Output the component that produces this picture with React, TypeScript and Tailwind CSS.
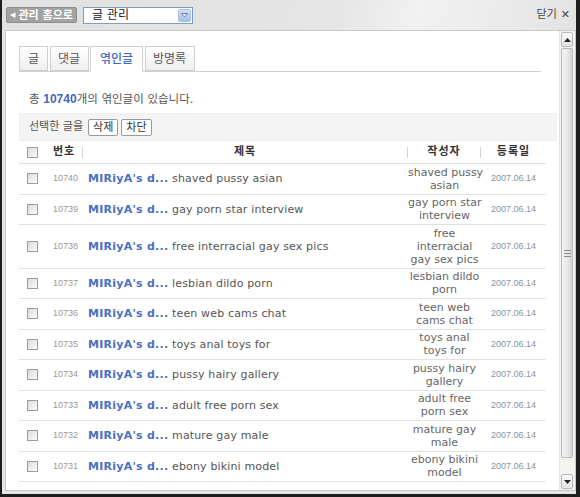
import React from 'react';

type Row = { no: number; title: string; author: string[] };

const rows: Row[] = [
  { no: 10740, title: 'shaved pussy asian', author: ['shaved pussy', 'asian'] },
  { no: 10739, title: 'gay porn star interview', author: ['gay porn star', 'interview'] },
  { no: 10738, title: 'free interracial gay sex pics', author: ['free', 'interracial', 'gay sex pics'] },
  { no: 10737, title: 'lesbian dildo porn', author: ['lesbian dildo', 'porn'] },
  { no: 10736, title: 'teen web cams chat', author: ['teen web', 'cams chat'] },
  { no: 10735, title: 'toys anal toys for', author: ['toys anal', 'toys for'] },
  { no: 10734, title: 'pussy hairy gallery', author: ['pussy hairy', 'gallery'] },
  { no: 10733, title: 'adult free porn sex', author: ['adult free', 'porn sex'] },
  { no: 10732, title: 'mature gay male', author: ['mature gay', 'male'] },
  { no: 10731, title: 'ebony bikini model', author: ['ebony bikini', 'model'] },
];

const font = "font-['DejaVu_Sans','Noto_Sans_CJK_KR',sans-serif]";

const Checkbox = () => (
  <div className="w-[11px] h-[11px] border border-[#9c9c9c] bg-gradient-to-br from-[#dcdcdc] to-[#fbfbfb]" />
);

const Sep = () => <div className="w-px h-[11px] bg-[#d4d4d4]" />;

const Scrollbar = () => (
  <div className="w-[16px] flex flex-col bg-[#f3f3ef] border-l border-[#e2e2e2] py-[1px] pr-[1px]">
    <div className="h-[15px] mx-[1px] border border-[#b9b9b9] rounded-[2px] bg-gradient-to-b from-[#fbfbfb] to-[#e4e4e4] flex items-center justify-center">
      <svg width="7" height="4" viewBox="0 0 7 4"><path d="M0 4 L3.5 0 L7 4 Z" fill="#222" /></svg>
    </div>
    <div className="h-[410px] mx-[1px] mt-[1px] border border-[#b8b8b8] rounded-[2px] bg-gradient-to-r from-[#f4f4f4] via-[#e9e9e9] to-[#d6d6d6] flex items-center justify-center">
      <div className="flex flex-col gap-[2px]">
        <div className="w-[7px] h-px bg-[#8a8a8a]" />
        <div className="w-[7px] h-px bg-[#8a8a8a]" />
        <div className="w-[7px] h-px bg-[#8a8a8a]" />
      </div>
    </div>
    <div className="flex-1" />
    <div className="h-[15px] mx-[1px] border border-[#b9b9b9] rounded-[2px] bg-gradient-to-b from-[#fbfbfb] to-[#e4e4e4] flex items-center justify-center">
      <svg width="7" height="4" viewBox="0 0 7 4"><path d="M0 0 L3.5 4 L7 0 Z" fill="#222" /></svg>
    </div>
  </div>
);

const App: React.FC = () => {
  const tabs = [
    { label: '글', w: 'w-[29px]' },
    { label: '댓글', w: 'w-[39px]' },
    { label: '엮인글', w: 'w-[53px]', active: true },
    { label: '방명록', w: 'w-[50px]' },
  ];

  return (
    <div className={`w-[580px] h-[497px] bg-[#1e1e1e] pl-[2px] pr-[4px] pb-[3px] ${font}`}>
      <div className="h-full flex flex-col bg-[#e6e6e6]">
        {/* Header */}
        <div className="h-[30px] flex items-center pl-[4px] pr-[6px] bg-[linear-gradient(100deg,#e1e1e1_0%,#e5e5e5_58%,#f1f1f1_72%,#ececec_84%,#e3e3e3_100%)]">
          <button className="h-[16px] w-[71px] flex items-center justify-center gap-[3px] bg-[#a2a2a2] border border-[#8e8e8e] rounded-[2px] text-white text-[11px] font-bold leading-none">
            <span className="text-[7px]">◀</span>관리 홈으로
          </button>
          <div className="ml-[6px] w-[110px] h-[17px] bg-white border border-[#7f9db9] flex items-center justify-between pl-[8px] pr-[1px]">
            <span className="text-[12px] text-[#222] leading-none">글 관리</span>
            <div className="w-[13px] h-[13px] rounded-[2px] border border-[#a9bfe8] bg-gradient-to-b from-[#d2defa] to-[#a7bdec] flex items-center justify-center">
              <svg width="7" height="5" viewBox="0 0 7 5"><path d="M0.5 0.5 L3.5 4 L6.5 0.5 Z" fill="#fff" stroke="#4d6185" strokeWidth="0.8" /></svg>
            </div>
          </div>
          <div className="ml-auto flex items-center gap-[4px] text-[#444]">
            <span className="text-[11px]">닫기</span>
            <span className="text-[11px] font-bold">✕</span>
          </div>
        </div>

        {/* Body */}
        <div className="flex-1 pl-[3px] pb-[3px]">
          <div className="h-full flex bg-white border border-[#c9c9c9]">
            <div className="flex-1 overflow-hidden pl-[13px] pt-[15px]">
              {/* Tabs */}
              <div className="w-[522px] flex gap-[1.5px] border-b border-[#d0d0d0] h-[26px] items-end">
                {tabs.map(t => (
                  <div
                    key={t.label}
                    className={`${t.w} h-[25px] flex items-center justify-center text-[12px] border border-[#cfcfcf] ${
                      t.active ? 'bg-white border-b-white text-[#3f68c2] font-medium h-[26px] -mb-px' : 'bg-gradient-to-b from-white to-[#efefef] text-[#555]'
                    }`}
                  >
                    {t.label}
                  </div>
                ))}
              </div>

              <p className="mt-[19px] pl-[10px] text-[11.5px] text-[#555] leading-[16px]">
                총 <span className="font-bold text-[#3f68c2] font-['Liberation_Sans',sans-serif] text-[12px]">10740</span>개의 엮인글이 있습니다.
              </p>

              {/* Action bar */}
              <div className="mt-[6px] w-[538px] h-[28px] bg-[#f4f4f4] border border-[#efefef] flex items-center pl-[9px] gap-[3px] text-[11px] text-[#555]">
                <span className="mr-[2px]">선택한 글을</span>
                <button className="h-[17px] px-[4px] bg-white border border-[#9a9a9a] rounded-[2px] text-[#333] text-[11px] leading-none">삭제</button>
                <button className="h-[17px] px-[4px] bg-white border border-[#9a9a9a] rounded-[2px] text-[#333] text-[11px] leading-none">차단</button>
              </div>

              {/* Table */}
              <div className="w-[527px]">
                <div className="grid grid-cols-[29px_35px_325px_73px_65px] h-[23px] items-center border-b border-[#dcdcdc] text-[11px] font-bold text-[#333] tracking-[1px]">
                  <div className="pl-[8px]"><Checkbox /></div>
                  <div className="flex items-center justify-between pl-[5px]"><span>번호</span><Sep /></div>
                  <div className="flex items-center"><span className="flex-1 text-center">제목</span><Sep /></div>
                  <div className="flex items-center"><span className="flex-1 text-center">작성자</span><Sep /></div>
                  <div className="text-center">등록일</div>
                </div>
                {rows.map(r => (
                  <div key={r.no} className="grid grid-cols-[29px_35px_325px_73px_65px] items-center border-b border-[#e2e2e2] py-[1.75px]">
                    <div className="pl-[8px]"><Checkbox /></div>
                    <div className="pl-[5px] text-[9px] text-[#999] font-['Liberation_Sans',sans-serif]">{r.no}</div>
                    <div className="pl-[5px] text-[11px] leading-[13px] whitespace-nowrap">
                      <span className="font-bold text-[#4a6fc4] tracking-[0.25px]">MIRiyA's d...</span>
                      <span className="text-[#555] tracking-[0.15px]"> {r.title}</span>
                    </div>
                    <div className="text-center text-[11px] leading-[13px] text-[#666] whitespace-nowrap">
                      {r.author.map((a, i) => <div key={i}>{a}</div>)}
                    </div>
                    <div className="text-center text-[9px] text-[#8493a8] font-['Liberation_Sans',sans-serif]">2007.06.14</div>
                  </div>
                ))}
              </div>
            </div>
            <Scrollbar />
          </div>
        </div>
      </div>
    </div>
  );
};

export default App;
